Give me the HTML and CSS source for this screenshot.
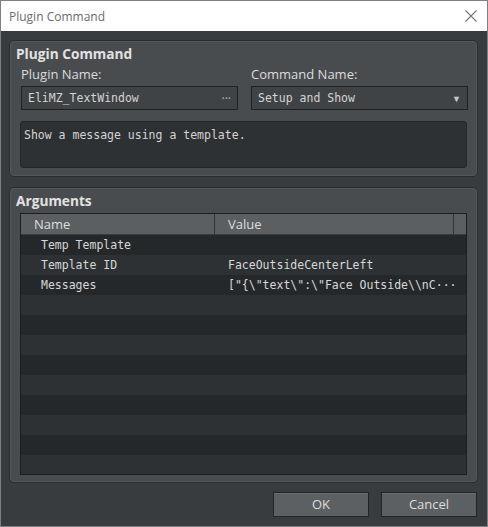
FILE: index.html
```html
<!DOCTYPE html>
<html lang="en">
<head>
    <meta charset="UTF-8">
    <title>Plugin Command</title>
    <link rel="stylesheet" href="styles.css">
</head>
<body>
    <div class="window">
        <div class="titlebar">
            <span class="title">Plugin Command</span>
            <svg class="close" width="12" height="12" viewBox="0 0 12 12">
                <path d="M0.5 0.5 L11.5 11.5 M11.5 0.5 L0.5 11.5" stroke="#777" stroke-width="1.1" fill="none"/>
            </svg>
        </div>

        <div class="body">
            <!-- 插件命令 -->
            <div class="group group_cmd">
                <div class="group_title">Plugin Command</div>
                <div class="fields">
                    <div class="field">
                        <div class="label">Plugin Name:</div>
                        <div class="input">
                            <span class="mono">EliMZ_TextWindow</span>
                            <span class="dots">···</span>
                        </div>
                    </div>
                    <div class="field">
                        <div class="label">Command Name:</div>
                        <div class="input">
                            <span class="mono">Setup and Show</span>
                            <span class="arrow">▼</span>
                        </div>
                    </div>
                </div>
                <div class="desc mono">Show a message using a template.</div>
            </div>

            <!-- 参数 -->
            <div class="group group_args">
                <div class="group_title">Arguments</div>
                <div class="table">
                    <div class="thead">
                        <div class="th th_name">Name</div>
                        <div class="th th_value">Value</div>
                        <div class="th th_pad"></div>
                    </div>
                    <div class="row"><div class="cell c_name">Temp Template</div><div class="cell c_value"></div></div>
                    <div class="row"><div class="cell c_name">Template ID</div><div class="cell c_value">FaceOutsideCenterLeft</div></div>
                    <div class="row"><div class="cell c_name">Messages</div><div class="cell c_value">["{\"text\":\"Face Outside\\nC···</div></div>
                    <div class="row"></div>
                    <div class="row"></div>
                    <div class="row"></div>
                    <div class="row"></div>
                    <div class="row"></div>
                    <div class="row"></div>
                    <div class="row"></div>
                    <div class="row"></div>
                    <div class="row"></div>
                </div>
            </div>

            <div class="buttons">
                <div class="btn">OK</div>
                <div class="btn">Cancel</div>
            </div>
        </div>
    </div>
</body>
</html>
```

FILE: styles.css
```css
body {
    margin: 0;
    background-color: #36393b;
    font-family: "Open Sans", "Noto Sans", sans-serif;
}
.window {
    width: 488px;
    height: 527px;
    box-sizing: border-box;
    border: 1px solid #7d7f80;
    background-color: #393c3e;
    overflow: hidden;
}
.titlebar {
    height: 30px;
    background-color: #fff;
    display: flex;
    align-items: center;
    justify-content: space-between;
    padding: 0 9px 0 8px;
}
.title {
    font-size: 12px;
    color: #6a6a6a;
}
.close {
    margin-right: 1px;
}
.body {
    padding: 9px 9px 0 8px;
}
.group {
    background-color: #494c4e;
    border: 1px solid #2a2d2f;
    border-radius: 5px;
    box-shadow: inset 0 0 0 1px #55585a;
    padding: 3px 10px 8px 10px;
}
.group_cmd {
    height: 137px;
    box-sizing: border-box;
}
.group_args {
    margin-top: 10px;
    height: 296px;
    box-sizing: border-box;
}
.group_title {
    font-size: 13.7px;
    font-weight: bold;
    color: #e2e2e2;
    margin-left: -4px;
    height: 19px;
    line-height: 19px;
}
.fields {
    display: grid;
    grid-template-columns: 217px 217px;
    column-gap: 13px;
    padding-left: 1px;
}
.label {
    font-size: 13px;
    color: #dcdcdc;
    height: 23px;
    line-height: 23px;
}
.input {
    height: 24px;
    box-sizing: border-box;
    border: 1px solid #1f2123;
    background-color: #404345;
    display: flex;
    align-items: center;
    justify-content: space-between;
    padding: 0 6px 0 6px;
}
.mono {
    font-family: "DejaVu Sans Mono", monospace;
    font-size: 11.5px;
    color: #d4d4d4;
}
.dots {
    color: #bbb;
    font-size: 12px;
}
.arrow {
    color: #c8c8c8;
    font-size: 9px;
}
.desc {
    margin-top: 11px;
    height: 47px;
    box-sizing: border-box;
    background-color: #2e3133;
    border: 1px solid #25282a;
    border-radius: 3px;
    padding: 6px 3px;
}
.table {
    margin-top: 3px;
    border: 1px solid #1b1d1f;
    height: 262px;
    box-sizing: border-box;
    background-color: #2e3235;
    overflow: hidden;
}
.thead {
    display: flex;
    height: 20px;
    background-color: #5b5f61;
    border-bottom: 1px solid #3a3d3f;
}
.th {
    font-size: 13px;
    color: #dedede;
    line-height: 20px;
    box-sizing: border-box;
}
.th_name {
    width: 194px;
    padding-left: 13px;
    border-right: 1px solid #303234;
}
.th_value {
    width: 239px;
    padding-left: 13px;
    border-right: 1px solid #303234;
}
.th_pad {
    flex: 1;
}
.row {
    display: flex;
    height: 20px;
    background-color: #25282b;
}
.row:nth-child(odd) {
    background-color: #2d3134;
}
.cell {
    font-family: "DejaVu Sans Mono", monospace;
    font-size: 11.5px;
    color: #d8d8d8;
    line-height: 20px;
    white-space: nowrap;
    overflow: hidden;
}
.c_name {
    width: 194px;
    padding-left: 20px;
    box-sizing: border-box;
}
.c_value {
    padding-left: 13px;
}
.buttons {
    display: flex;
    justify-content: flex-end;
    gap: 12px;
    margin-top: 9px;
    padding-right: 1px;
}
.btn {
    width: 96px;
    height: 25px;
    box-sizing: border-box;
    border: 1px solid #222426;
    background-color: #5c6062;
    box-shadow: inset 0 1px 0 #6a6e70;
    color: #dedede;
    font-size: 13px;
    text-align: center;
    line-height: 23px;
}
```
